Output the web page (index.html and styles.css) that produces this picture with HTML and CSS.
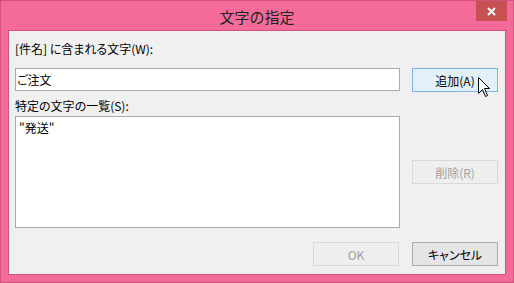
FILE: index.html
```html
<!DOCTYPE html>
<html lang="ja">
<head>
<meta charset="utf-8">
<link rel="stylesheet" href="styles.css">
</head>
<body>
<div class="window">
  <div class="titlebar">
    <span class="title">文字の指定</span>
    <div class="close">
      <svg width="31" height="20" viewBox="0 0 31 20"><path d="M12 7 L19 14 M19 7 L12 14" stroke="#fff" stroke-width="2" fill="none"/></svg>
    </div>
  </div>
  <div class="client">
    <div class="form">
      <div class="label l1">[件名] に含まれる文字(W):</div>
      <div class="input">ご注文</div>
      <div class="btn hover add">追加(A)</div>
      <div class="label l2">特定の文字の一覧(S):</div>
      <div class="list">"発送"</div>
      <div class="btn disabled del">削除(R)</div>
      <div class="btn disabled ok">OK</div>
      <div class="btn cancel">キャンセル</div>
    </div>
  </div>
  <svg class="cursor" width="13" height="21" viewBox="0 0 13 21"><path d="M0.5 0.5 L0.5 16.5 L4.5 12.5 L7.5 19.5 L9.5 18.5 L6.5 11.5 L11.5 11.5 Z" fill="#fff" stroke="#000" stroke-width="1"/></svg>
</div>
</body>
</html>
```

FILE: styles.css
```css
* { box-sizing: border-box; }
html, body { margin: 0; padding: 0; background: #fff; }
body {
  font-family: "Noto Sans CJK JP", "Noto Sans", sans-serif;
  font-size: 12px;
  color: #000;
  font-feature-settings: "palt";
}
.window {
  position: relative;
  width: 514px;
  height: 283px;
  background: #f46b9a;
  border: 1px solid #d0527e;
  padding: 0 7px 7px 7px;
  display: flex;
  flex-direction: column;
}
.titlebar {
  position: relative;
  height: 29px;
  display: flex;
  align-items: center;
  justify-content: center;
}
.title {
  font-size: 15px;
  color: #222;
  line-height: 18px;
  padding-top: 2px;
  font-feature-settings: normal;
}
.close {
  position: absolute;
  top: 0;
  right: -1px;
  width: 31px;
  height: 20px;
  background: #c75050;
  display: flex;
}
.client {
  flex: 1;
  background: #f0f0f0;
  border: 1px solid #d0527e;
}
.form {
  display: grid;
  grid-template-columns: 385px 86px;
  column-gap: 12px;
  padding: 10px 0 0 6px;
  align-items: start;
}
.label { line-height: 16px; height: 16px; white-space: nowrap; grid-column: 1; }
.l1 { grid-row: 1; }
.input {
  grid-row: 2; grid-column: 1;
  margin-top: 11px;
  height: 23px;
  background: #fff;
  border: 1px solid #ababab;
  padding: 0 1px;
  line-height: 21px;
}
.btn {
  height: 24px;
  width: 86px;
  display: flex;
  align-items: center;
  justify-content: center;
  border: 1px solid #acacac;
  background: #e5e5e5;
}
.add {
  grid-row: 2; grid-column: 2;
  margin-top: 11px;
  background: #e3f0fb;
  border-color: #7eb4ea;
}
.l2 { grid-row: 3; margin-top: 6px; }
.list {
  grid-row: 4; grid-column: 1;
  margin-top: 2px;
  height: 112px;
  background: #fff;
  border: 1px solid #ababab;
  padding: 3px 3px;
  line-height: 16px;
}
.del { grid-row: 4; grid-column: 2; margin-top: 46px; }
.disabled { background: #efefef; border-color: #d9d9d9; color: #a0a0a0; }
.ok { grid-row: 5; grid-column: 1; justify-self: end; margin-right: 1px; margin-top: 14px; }
.cancel { grid-row: 5; grid-column: 2; margin-top: 14px; }
.cursor { position: absolute; left: 477px; top: 76px; }
```
